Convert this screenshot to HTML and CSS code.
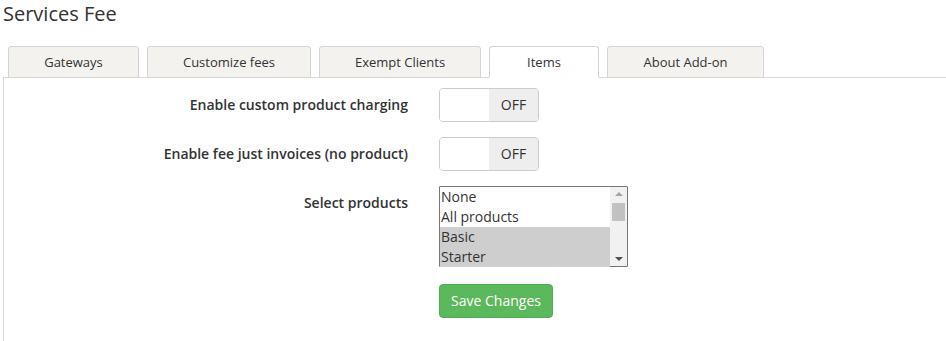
FILE: index.html
```html
<!DOCTYPE html>
<html lang="en">
<head>
    <meta charset="UTF-8">
    <title>Services Fee</title>
    <link rel="stylesheet" href="styles.css">
</head>
<body>
    <div class="page">
        <h1 class="page-title">Services Fee</h1>

        <ul class="tabs">
            <li class="tab">Gateways</li>
            <li class="tab">Customize fees</li>
            <li class="tab">Exempt Clients</li>
            <li class="tab active">Items</li>
            <li class="tab">About Add-on</li>
        </ul>

        <div class="tab-panel">
            <form class="settings-form">
                <label class="form-label">Enable custom product charging</label>
                <div class="form-field">
                    <div class="switch">
                        <span class="switch-knob"></span>
                        <span class="switch-state">OFF</span>
                    </div>
                </div>

                <label class="form-label">Enable fee just invoices (no product)</label>
                <div class="form-field">
                    <div class="switch">
                        <span class="switch-knob"></span>
                        <span class="switch-state">OFF</span>
                    </div>
                </div>

                <label class="form-label">Select products</label>
                <div class="form-field">
                    <div class="listbox">
                        <ul class="listbox-options">
                            <li>None</li>
                            <li>All products</li>
                            <li class="selected">Basic</li>
                            <li class="selected">Starter</li>
                        </ul>
                        <div class="listbox-scroll">
                            <span class="arrow-up"></span>
                            <span class="scroll-thumb"></span>
                            <span class="arrow-down"></span>
                        </div>
                    </div>
                </div>

                <div class="form-actions">
                    <button type="button" class="save-btn">Save Changes</button>
                </div>
            </form>
        </div>
    </div>
</body>
</html>
```

FILE: styles.css
```css
* {
    margin: 0;
    padding: 0;
    box-sizing: border-box;
}

body {
    font-family: 'Open Sans', 'Liberation Sans', sans-serif;
    color: #333;
    background: #fff;
    overflow: hidden;
}

.page {
    padding: 3px 0 0 3px;
}

.page-title {
    font-size: 20px;
    font-weight: 400;
    line-height: 22px;
    color: #333;
    margin-bottom: 21px;
}

/* tabs */
.tabs {
    list-style: none;
    display: flex;
    gap: 8px;
    padding-left: 5px;
    margin-bottom: -1px;
    position: relative;
    z-index: 1;
}

.tab {
    font-size: 13px;
    line-height: 20px;
    padding: 5px 0;
    text-align: center;
    background: #f3f2ef;
    border: 1px solid #d4d4d4;
    border-radius: 3px 3px 0 0;
    color: #333;
}

.tab:nth-child(1) { width: 131px; }
.tab:nth-child(2) { width: 164px; }
.tab:nth-child(3) { width: 162px; }
.tab:nth-child(4) { width: 110px; }
.tab:nth-child(5) { width: 157px; }

.tab.active {
    background: #fff;
    border-bottom-color: #fff;
}

.tab-panel {
    border-top: 1px solid #d9d9d9;
    border-left: 1px solid #d9d9d9;
    min-height: 264px;
    padding-top: 10px;
}

/* form */
.settings-form {
    display: grid;
    grid-template-columns: 404px auto;
    column-gap: 31px;
    row-gap: 15px;
    align-items: start;
}

.form-label {
    font-size: 14px;
    font-weight: 600;
    line-height: 20px;
    padding-top: 7px;
    text-align: right;
}

.form-field {
    display: flex;
}

.switch {
    display: flex;
    width: 100px;
    height: 34px;
    border: 1px solid #ccc;
    border-radius: 4px;
    overflow: hidden;
}

.switch-knob {
    width: 49px;
    background: #fff;
}

.switch-state {
    flex: 1;
    background: #eee;
    font-size: 14px;
    line-height: 32px;
    text-align: center;
}

.listbox {
    display: flex;
    width: 189px;
    height: 81px;
    border: 1px solid #767676;
    border-radius: 1px;
    background: #fff;
}

.listbox-options {
    list-style: none;
    flex: 1;
}

.listbox-options li {
    font-size: 14px;
    line-height: 20px;
    height: 20px;
    padding-left: 1px;
    color: #333;
}

.listbox-options li.selected {
    background: #cecece;
}

.listbox-scroll {
    width: 17px;
    background: #f1f1f1;
    position: relative;
}

.arrow-up,
.arrow-down {
    position: absolute;
    left: 5px;
    width: 0;
    height: 0;
    border-left: 4px solid transparent;
    border-right: 4px solid transparent;
}

.arrow-up {
    top: 5px;
    border-bottom: 4px solid #a3a3a3;
}

.arrow-down {
    bottom: 5px;
    border-top: 4px solid #505050;
}

.scroll-thumb {
    position: absolute;
    top: 16px;
    left: 2px;
    width: 13px;
    height: 18px;
    background: #c1c1c1;
}

.form-actions {
    grid-column: 2;
    padding-top: 2px;
}

.save-btn {
    font-family: 'Open Sans', 'Liberation Sans', sans-serif;
    font-size: 14px;
    line-height: 20px;
    color: #fff;
    background: #5cb85c;
    border: 1px solid #4cae4c;
    border-radius: 4px;
    width: 114px;
    height: 34px;
    cursor: pointer;
}
```
